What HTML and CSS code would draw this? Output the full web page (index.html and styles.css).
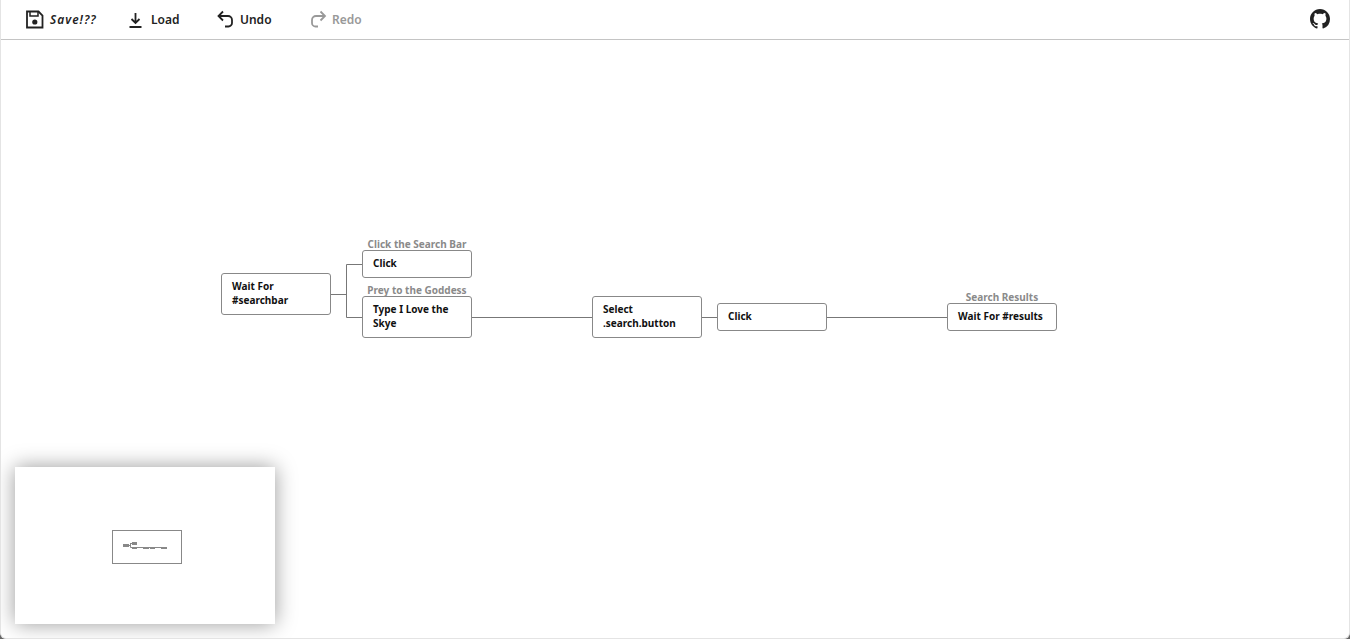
FILE: index.html
```html
<!DOCTYPE html>
<html lang="en">
<head>
<meta charset="utf-8">
<title>Flow editor</title>
<link rel="stylesheet" href="styles.css">
</head>
<body>
<div class="app">
  <header class="toolbar">
    <button class="tool tool-save">
      <svg class="icon" viewBox="0 -1 20 20" width="20" height="20"><path d="M2 1.500h11.500l4 4V17.500H2z" fill="none" stroke="#222" stroke-width="1.800"/><path d="M5 1.500v4.500h8V1.500" fill="none" stroke="#222" stroke-width="1.500"/><circle cx="9.800" cy="12" r="2.600" fill="#222"/></svg>
      <span class="label-italic">Save!??</span>
    </button>
    <button class="tool tool-load">
      <svg class="icon" viewBox="0 -1 20 20" width="20" height="20"><path d="M7.500 3v10M3.500 9l4 4 4-4M1.500 17h12" fill="none" stroke="#222" stroke-width="1.800"/></svg>
      <span>Load</span>
    </button>
    <button class="tool tool-undo">
      <svg class="icon" viewBox="0 -1 20 20" width="20" height="20"><path d="M6 1.500 1.500 6 6 10.500M1.500 6H11a4 4 0 0 1 4 4v3a3.500 3.500 0 0 1-3.500 3.500H8" fill="none" stroke="#222" stroke-width="1.800"/></svg>
      <span>Undo</span>
    </button>
    <button class="tool tool-redo">
      <svg class="icon" viewBox="0 -1 20 20" width="20" height="20"><path d="M12.500 1.500 17 6l-4.500 4.500M17 6H8a4 4 0 0 0-4 4v3a3.500 3.500 0 0 0 3.500 3.500H10" fill="none" stroke="#999" stroke-width="1.800"/></svg>
      <span>Redo</span>
    </button>
    <span class="spacer"></span>
    <svg class="github" viewBox="0 0 16 16" width="20" height="20"><path fill="#222" d="M8 0C3.580 0 0 3.580 0 8c0 3.540 2.290 6.530 5.470 7.590.4.070.55-.17.55-.38 0-.19-.01-.82-.01-1.490-2.010.37-2.530-.49-2.690-.94-.09-.23-.48-.94-.82-1.130-.28-.15-.68-.52-.01-.53.630-.01 1.080.58 1.230.82.720 1.210 1.870.87 2.330.66.070-.52.280-.87.510-1.070-1.780-.2-3.640-.89-3.640-3.950 0-.87.310-1.590.820-2.150-.08-.2-.36-1.020.08-2.120 0 0 .67-.21 2.200.82.640-.18 1.320-.27 2-.27s1.360.09 2 .27c1.530-1.040 2.200-.82 2.200-.82.440 1.100.160 1.920.08 2.120.51.560.82 1.270.82 2.150 0 3.070-1.870 3.750-3.650 3.950.29.25.54.73.54 1.480 0 1.070-.01 1.930-.01 2.200 0 .21.150.46.550.38A8.010 8.010 0 0 0 16 8c0-4.420-3.580-8-8-8z"/></svg>
  </header>

  <main class="canvas">
    <svg class="wires" width="1350" height="600" viewBox="0 40 1350 600">
      <path d="M331 294.500H346.500M346.500 264.500V317.500M346.500 264.500H362M346.500 317.500H362M472 317.500H592M702 317.500H717M827 317.500H947" fill="none" stroke="#777" stroke-width="1"/>
    </svg>

    <div class="node n-wait"><span>Wait For #searchbar</span></div>
    <div class="node n-click1"><span class="title">Click the Search Bar</span><span>Click</span></div>
    <div class="node n-type"><span class="title">Prey to the Goddess</span><span>Type I Love the Skye</span></div>
    <div class="node n-select"><span>Select .search.button</span></div>
    <div class="node n-click2"><span>Click</span></div>
    <div class="node n-results"><span class="title">Search Results</span><span>Wait For #results</span></div>

    <aside class="minimap">
      <div class="viewport"></div>
      <svg class="mini-graph" width="260" height="157" viewBox="0 0 260 157">
        <path d="M114 78.500H115.500M115.500 76V80.500M115.500 76.500H117M115.500 80.500H152" fill="none" stroke="#888" stroke-width="1"/>
        <rect class="mini-node" x="108" y="77" width="6" height="3"/>
        <rect class="mini-node" x="117" y="75" width="5" height="3"/>
        <rect class="mini-node" x="117" y="80" width="5" height="2"/>
        <rect class="mini-node" x="128" y="80" width="6" height="2"/>
        <rect class="mini-node" x="135" y="80" width="5" height="2"/>
        <rect class="mini-node" x="146" y="80" width="6" height="2"/>
      </svg>
    </aside>
  </main>
</div>
</body>
</html>
```
FILE: styles.css
```css
* { box-sizing: border-box; }
html, body { margin: 0; height: 100%; }
body {
  background: #666;
  font-family: "Noto Sans", sans-serif;
  overflow: hidden;
}
.app {
  width: 1350px;
  height: 639px;
  background: #fff;
  border: 1px solid #e4e4e4;
  border-top: 0;
  border-radius: 0 0 6px 6px;
  display: flex;
  flex-direction: column;
  overflow: hidden;
}
.toolbar {
  height: 40px;
  flex: none;
  display: flex;
  align-items: center;
  padding: 0 19px 1px 24px;
  border-bottom: 1px solid #c4c4c4;
}
.tool {
  display: flex;
  align-items: center;
  gap: 3px;
  border: 0;
  padding: 0;
  background: none;
  font: 600 12px "Noto Sans", sans-serif;
  color: #222;
}
.tool-save { width: 103px; gap: 5px; }
.tool-load { width: 89px; }
.tool-undo { width: 91px; }
.tool-redo { color: #999; gap: 4px; }
.label-italic { font-style: italic; letter-spacing: 1px; }
.spacer { flex: 1; }
.canvas { position: relative; flex: 1; }
.wires { position: absolute; left: -1px; top: 0; }
.node {
  position: absolute;
  width: 110px;
  padding: 5px 10px;
  background: #fff;
  border: 1px solid #888;
  border-radius: 3px;
  font-size: 10px;
  font-weight: 700;
  line-height: 14px;
  color: #111;
}
.title {
  position: absolute;
  left: -10px;
  right: -10px;
  top: -13px;
  text-align: center;
  white-space: nowrap;
  color: #8a8a8a;
  font-weight: 700;
  font-size: 10px;
  line-height: 13px;
}
.n-wait { left: 220px; top: 233px; height: 42px; }
.n-click1 { left: 361px; top: 210px; height: 28px; }
.n-type { left: 361px; top: 256px; height: 42px; }
.n-select { left: 591px; top: 256px; height: 42px; }
.n-click2 { left: 716px; top: 263px; height: 28px; }
.n-results { left: 946px; top: 263px; height: 28px; }
.minimap {
  position: absolute;
  left: 14px;
  top: 427px;
  width: 260px;
  height: 157px;
  background: #fff;
  box-shadow: 0 0 20px rgba(0, 0, 0, 0.4);
}
.viewport {
  position: absolute;
  left: 97px;
  top: 63px;
  width: 70px;
  height: 34px;
  border: 1px solid #888;
}
.mini-graph { position: absolute; left: 0; top: 0; }
.mini-node { fill: #888; }
```
